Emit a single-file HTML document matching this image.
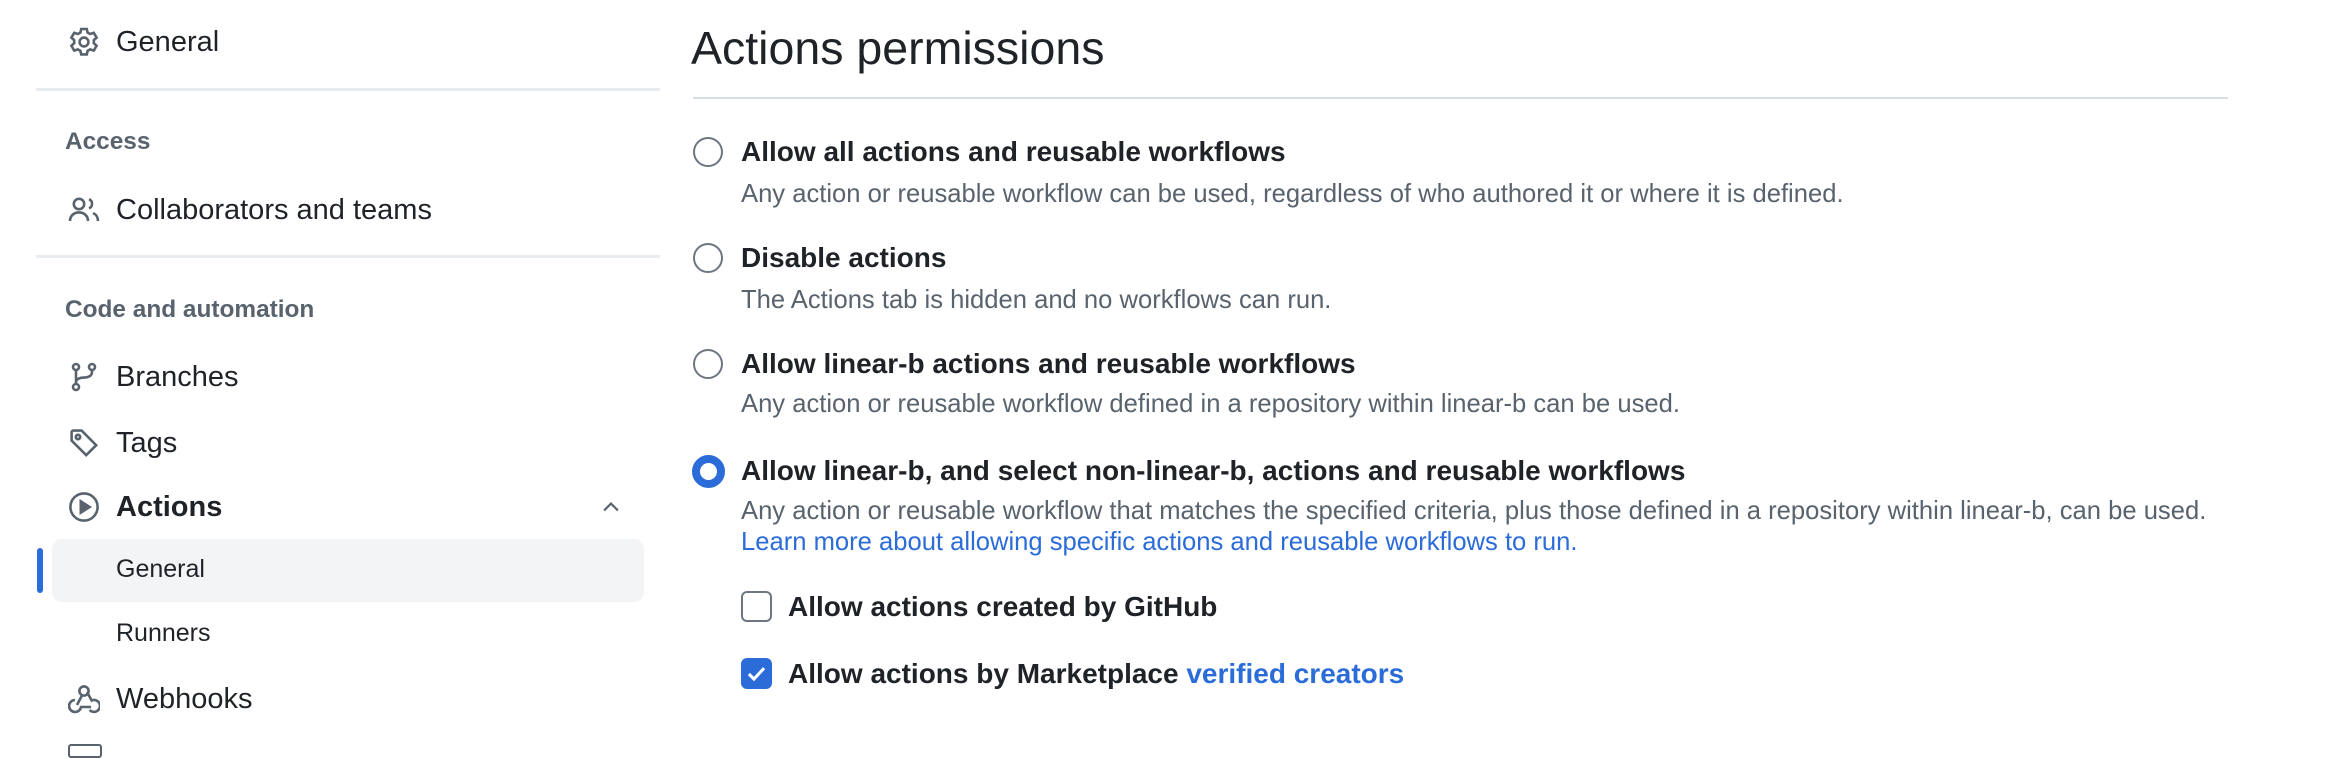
<!DOCTYPE html>
<html><head><meta charset="utf-8"><style>
body{margin:0;width:2336px;height:752px;background:#fff;overflow:hidden;font-family:"Liberation Sans",sans-serif;color:#1f2328;position:relative}
.a{position:absolute;white-space:nowrap}
.nav{font-size:29px;line-height:32px;left:116px}
.hd{font-size:24.4px;font-weight:bold;color:#59636e;left:65px;line-height:28px}
.ic{position:absolute;left:68px;width:32px;height:32px}
.hr{position:absolute;height:3px;background:#e8ebef}
.lab{font-size:28px;font-weight:bold;left:741px;line-height:30px}
.desc{font-size:25.6px;color:#59636e;left:741px;line-height:28px}
.rad{position:absolute;left:693px;width:26px;height:26px;border:2.5px solid #6e7781;border-radius:50%;background:#fff}
.cb{position:absolute;left:741px;width:27px;height:27px;border:2.5px solid #6e7781;border-radius:6px}
a{color:#2b6cd8;text-decoration:none}
</style></head><body>
<svg class="ic" style="top:26px" viewBox="0 0 16 16" fill="none" stroke="#59636e" stroke-width="1.3"><path d="M6.6 1.5h2.8l.4 1.8 1.3.7 1.8-.6 1.4 2.4-1.4 1.3v1.5l1.4 1.3-1.4 2.4-1.8-.6-1.3.7-.4 1.8H6.6l-.4-1.8-1.3-.7-1.8.6-1.4-2.4 1.4-1.3V7.1L1.7 5.8l1.4-2.4 1.8.6 1.3-.7z"/><circle cx="8" cy="8" r="2.2"/></svg>
<div class="a nav" style="top:26px">General</div>
<div class="hr" style="left:36px;width:624px;top:88px"></div>
<div class="a hd" style="top:128px">Access</div>
<svg class="ic" style="top:194px" viewBox="0 0 16 16" fill="none" stroke="#59636e" stroke-width="1.3"><circle cx="5.5" cy="5" r="2.6"/><path d="M1 13.5c0-2.6 2-4.3 4.5-4.3S10 10.9 10 13.5M10.5 2.6a2.5 2.5 0 0 1 0 4.6M12.5 9.5c1.5.7 2.5 2 2.5 4"/></svg>
<div class="a nav" style="top:194px">Collaborators and teams</div>
<div class="hr" style="left:36px;width:624px;top:255px"></div>
<div class="a hd" style="top:296px">Code and automation</div>
<svg class="ic" style="top:361px" viewBox="0 0 16 16" fill="none" stroke="#59636e" stroke-width="1.3"><circle cx="4" cy="3" r="1.5"/><circle cx="4" cy="13" r="1.5"/><circle cx="12" cy="3" r="1.5"/><path d="M4 4.5v7M12 4.5v1c0 2-2 2.8-4 2.8S4 9 4 10.5"/></svg>
<div class="a nav" style="top:361px">Branches</div>
<svg class="ic" style="top:427px" viewBox="0 0 16 16" fill="none" stroke="#59636e" stroke-width="1.3"><path d="M1.8 2.6v4.2l7.3 7.3 5-5-7.3-7.3H2.6a.8.8 0 0 0-.8.8z"/><circle cx="5" cy="5" r="1.1"/></svg>
<div class="a nav" style="top:427px">Tags</div>
<svg class="ic" style="top:491px" viewBox="0 0 16 16" fill="none" stroke="#59636e" stroke-width="1.3"><circle cx="8" cy="8" r="6.8"/><path d="M6.4 5.2v5.6L10.8 8z" fill="#59636e"/></svg>
<div class="a nav" style="top:491px;font-weight:bold">Actions</div>
<svg class="a" style="left:598px;top:496px" width="26" height="22" viewBox="0 0 16 16" fill="none" stroke="#59636e" stroke-width="1.6"><path d="M3 10.5 8 5.5l5 5"/></svg>
<div class="a" style="left:52px;top:539px;width:592px;height:63px;background:#f3f4f6;border-radius:10px"></div>
<div class="a" style="left:37px;top:548px;width:6px;height:45px;background:#2b6cd8;border-radius:3px"></div>
<div class="a nav" style="top:553px;font-size:25px">General</div>
<div class="a nav" style="top:617px;font-size:25px">Runners</div>
<svg class="ic" style="top:683px" viewBox="0 0 16 16" fill="none" stroke="#59636e" stroke-width="1.3"><circle cx="8" cy="4" r="2.3"/><path d="M7 6.2 4.5 11M3.5 8.5a3 3 0 1 0 3 3.5h5M9.5 4.5l2.3 4.2a3 3 0 1 1-1 4.8"/></svg>
<div class="a nav" style="top:683px">Webhooks</div>
<div class="a" style="left:68px;top:744px;width:30px;height:10px;border:2.5px solid #59636e;border-radius:3px"></div>

<div class="a" style="left:691px;top:20px;font-size:46.5px;line-height:56px">Actions permissions</div>
<div class="hr" style="left:693px;width:1535px;top:97px;height:2px;background:#d8dee4"></div>

<div class="rad" style="top:137px"></div>
<div class="a lab" style="top:137px">Allow all actions and reusable workflows</div>
<div class="a desc" style="top:180px">Any action or reusable workflow can be used, regardless of who authored it or where it is defined.</div>
<div class="rad" style="top:243px"></div>
<div class="a lab" style="top:243px">Disable actions</div>
<div class="a desc" style="top:286px">The Actions tab is hidden and no workflows can run.</div>
<div class="rad" style="top:349px"></div>
<div class="a lab" style="top:349px">Allow linear-b actions and reusable workflows</div>
<div class="a desc" style="top:390px">Any action or reusable workflow defined in a repository within linear-b can be used.</div>
<div class="rad" style="top:455px;left:692px;width:17px;height:17px;border:8px solid #2b6cd8"></div>
<div class="a lab" style="top:456px">Allow linear-b, and select non-linear-b, actions and reusable workflows</div>
<div class="a desc" style="top:497px">Any action or reusable workflow that matches the specified criteria, plus those defined in a repository within linear-b, can be used.</div>
<div class="a desc" style="top:528px"><a>Learn more about allowing specific actions and reusable workflows to run.</a></div>
<div class="cb" style="top:591px"></div>
<div class="a lab" style="top:592px;left:788px">Allow actions created by GitHub</div>
<div class="cb" style="top:658px;background:#2b6cd8;border-color:#2b6cd8"><svg width="27" height="27" viewBox="0 0 16 16" fill="none" stroke="#fff" stroke-width="1.8"><path d="M3.5 8.3 6.5 11.3 12.5 4.8"/></svg></div>
<div class="a lab" style="top:659px;left:788px">Allow actions by Marketplace <a>verified creators</a></div>
</body></html>
